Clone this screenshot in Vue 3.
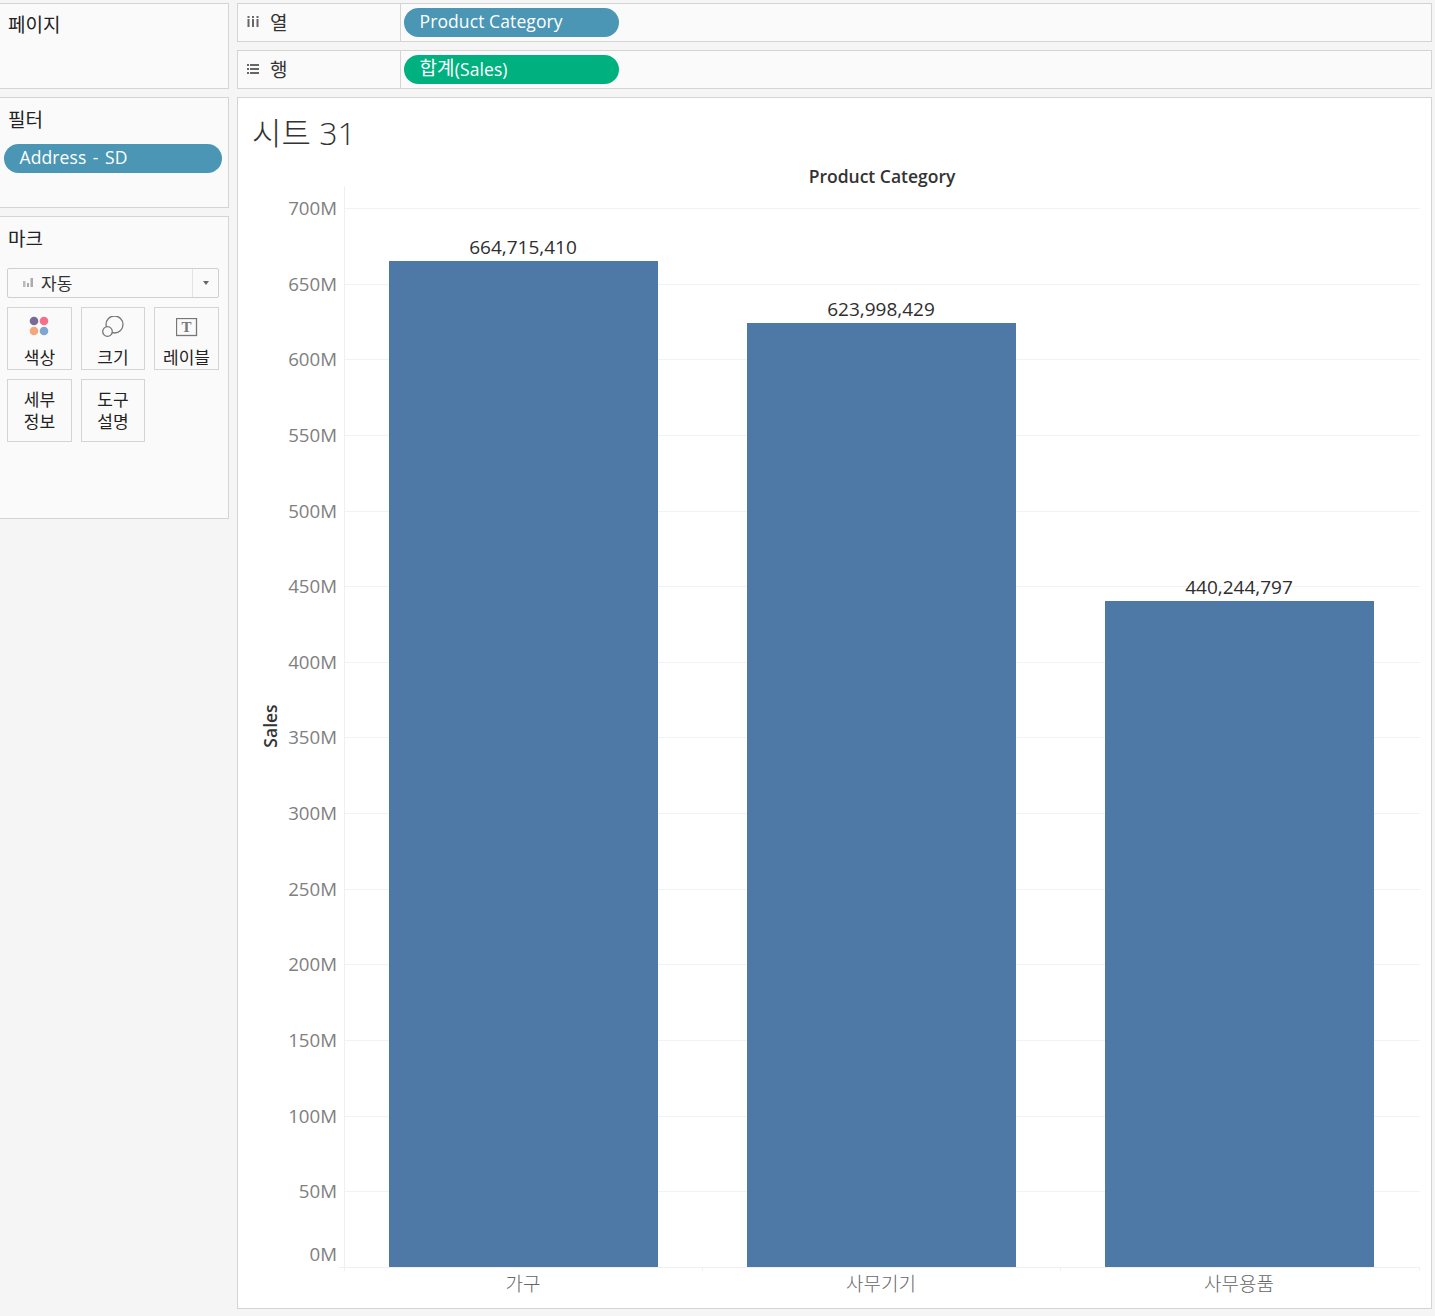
<script setup>
const ticks = Array.from({ length: 15 }, (_, i) => {
  const v = i * 50
  return { v, label: v + 'M', y: Math.round(1266.9 - v * 1.5128) }
})
const bars = [
  { name: '가구', label: '664,715,410', x: 389, top: 261 },
  { name: '사무기기', label: '623,998,429', x: 747, top: 323 },
  { name: '사무용품', label: '440,244,797', x: 1105, top: 601 }
].map(b => ({ ...b, h: 1267 - b.top, cx: b.x + 134 }))
</script>

<template>
  <div class="page">
    <aside class="side">
      <section class="panel pages"><h3>페이지</h3></section>
      <section class="panel filters">
        <h3>필터</h3>
        <div class="pill teal filter-pill">Address - SD</div>
      </section>
      <section class="panel marks">
        <h3>마크</h3>
        <div class="select">
          <span class="sel-main">
            <svg width="10" height="9" viewBox="0 0 10 9" class="barsico">
              <rect x="0" y="3" width="2.500" height="6" fill="#bbb" />
              <rect x="4" y="5" width="2" height="4" fill="#aaa" />
              <rect x="7.500" y="0" width="2.500" height="9" fill="#aaa" />
            </svg>
            자동
          </span>
          <span class="sel-arrow"><i></i></span>
        </div>
        <div class="mark-grid">
          <div class="mark">
            <svg width="22" height="22" viewBox="0 0 22 22">
              <circle cx="5" cy="5" r="4.300" fill="#7b6a96" />
              <circle cx="15" cy="5" r="4.300" fill="#f4708a" />
              <circle cx="5" cy="15" r="4.300" fill="#f2a77c" />
              <circle cx="15" cy="15" r="4.300" fill="#7fa6d0" />
            </svg>
            <span>색상</span>
          </div>
          <div class="mark">
            <svg width="24" height="22" viewBox="0 0 24 22" fill="none" stroke="#777" stroke-width="1.300">
              <circle cx="13.500" cy="8.500" r="8.500" />
              <circle cx="6.500" cy="15.500" r="4.800" fill="#fafafa" />
            </svg>
            <span>크기</span>
          </div>
          <div class="mark">
            <svg width="22" height="20" viewBox="0 0 22 20">
              <rect x="0.500" y="0.500" width="20" height="17" fill="none" stroke="#777" stroke-width="1.300" />
              <text x="10.500" y="14" text-anchor="middle" class="t-glyph">T</text>
            </svg>
            <span>레이블</span>
          </div>
          <div class="mark two"><span>세부<br />정보</span></div>
          <div class="mark two"><span>도구<br />설명</span></div>
        </div>
      </section>
    </aside>

    <main class="main">
      <div class="shelf">
        <div class="shelf-head">
          <svg width="12" height="11" viewBox="0 0 12 11" fill="#666">
            <rect x="0.500" y="0" width="2" height="2" /><rect x="0.500" y="3" width="2" height="8" />
            <rect x="5" y="0" width="2" height="2" /><rect x="5" y="3" width="2" height="8" />
            <rect x="9.500" y="0" width="2" height="2" /><rect x="9.500" y="3" width="2" height="8" />
          </svg>
          <span>열</span>
        </div>
        <div class="shelf-body"><div class="pill teal shelf-pill">Product Category</div></div>
      </div>
      <div class="shelf">
        <div class="shelf-head">
          <svg width="12" height="10" viewBox="0 0 12 10" fill="#666">
            <rect x="0" y="0" width="2" height="2" /><rect x="3" y="0" width="9" height="2" />
            <rect x="0" y="4" width="2" height="2" /><rect x="3" y="4" width="9" height="2" />
            <rect x="0" y="8" width="2" height="2" /><rect x="3" y="8" width="9" height="2" />
          </svg>
          <span>행</span>
        </div>
        <div class="shelf-body"><div class="pill green shelf-pill sum"><span class="kr">합계</span>(Sales)</div></div>
      </div>

      <section class="sheet">
        <h1>시트 31</h1>
        <svg class="chart" width="1194" height="1211" viewBox="238 98 1194 1211">
          <line x1="344.500" x2="344.500" y1="186" y2="1271" class="axis" />
          <g v-for="t in ticks" :key="t.v">
            <line x1="345" x2="1420" :y1="t.y + .5" :y2="t.y + .5" class="grid" />
            <text x="337" :y="t.v === 0 ? 1261 : t.y + 7" text-anchor="end" class="tick">{{ t.label }}</text>
          </g>
          <line x1="339" x2="1420" y1="1267.500" y2="1267.500" class="axis" />
          <line x1="1419.500" x2="1419.500" y1="1267" y2="1271" class="axis" />
          <line x1="702.500" x2="702.500" y1="1267" y2="1271" class="axis" />
          <line x1="1060.500" x2="1060.500" y1="1267" y2="1271" class="axis" />
          <text x="882" y="183" text-anchor="middle" class="head">Product Category</text>
          <text transform="translate(277 726) rotate(-90)" text-anchor="middle" class="head">Sales</text>
          <g v-for="b in bars" :key="b.name">
            <rect :x="b.x" :y="b.top" width="269" :height="b.h" fill="#4e79a7" />
            <text :x="b.cx" :y="b.top - 7" text-anchor="middle" class="val">{{ b.label }}</text>
            <text :x="b.cx" y="1291" text-anchor="middle" class="cat">{{ b.name }}</text>
          </g>
        </svg>
      </section>
    </main>
  </div>
</template>

<style>
html, body { margin: 0; background: #f5f5f5; }
</style>

<style scoped>
.page {
  width: 1435px;
  height: 1316px;
  box-sizing: border-box;
  padding: 3px 3px 7px 0;
  display: flex;
  gap: 8px;
  background: #f5f5f5;
  color: #222;
  font-family: "Open Sans", "Noto Sans CJK KR", sans-serif;
  overflow: hidden;
}
.side { width: 229px; flex: none; display: flex; flex-direction: column; gap: 8px; }
.panel {
  box-sizing: border-box;
  background: #fafafa;
  border: 1px solid #d4d4d4;
  border-left: 0;
  padding-left: 8px;
}
.panel h3 {
  margin: 0;
  font: 400 19px/24px "Noto Sans CJK KR", sans-serif;
  color: #222;
}
.pages { height: 86px; padding-top: 8px; }
.filters { height: 111px; padding-top: 9px; padding-left: 4px; }
.filters h3 { padding-left: 4px; }
.marks { height: 303px; padding-top: 9px; padding-left: 7px; }
.marks h3 { padding-left: 1px; }
.pill {
  box-sizing: border-box;
  height: 29px;
  border-radius: 15px;
  color: #fff;
  font-size: 17.500px;
  line-height: 27px;
  padding-left: 15.500px;
  white-space: nowrap;
  letter-spacing: 0.100px;
}
.teal { background: #4a96b4; }
.green { background: #00b180; }
.filter-pill { width: 218px; margin-top: 13px; word-spacing: 1.800px; }
.shelf-pill { width: 215px; }
.sum { line-height: 25px; }
.kr {
  font-family: "Noto Sans CJK KR", sans-serif;
  font-size: 19px;
  position: relative;
  top: -1px;
}
.select {
  margin-top: 18px;
  box-sizing: border-box;
  width: 212px;
  height: 30px;
  border: 1px solid #cfcfcf;
  border-radius: 2px;
  display: flex;
  background: #fafafa;
}
.sel-main {
  flex: 1;
  display: flex;
  align-items: center;
  gap: 8px;
  padding: 0 0 2px 15px;
  font: 400 17px/1 "Noto Sans CJK KR", sans-serif;
  color: #333;
}
.sel-arrow {
  width: 25px;
  border-left: 1px solid #e2e2e2;
  display: flex;
  align-items: center;
  justify-content: center;
}
.sel-arrow i {
  width: 0; height: 0;
  border-left: 3.500px solid transparent;
  border-right: 3.500px solid transparent;
  border-top: 4px solid #666;
}
.mark-grid {
  margin-top: 9px;
  width: 212px;
  display: grid;
  grid-template-columns: 65px 64px 65px;
  column-gap: 9px;
  row-gap: 9px;
}
.mark {
  box-sizing: border-box;
  height: 63px;
  border: 1px solid #d4d4d4;
  display: flex;
  flex-direction: column;
  align-items: center;
  justify-content: flex-end;
  padding-bottom: 1px;
  font: 400 17px/22px "Noto Sans CJK KR", sans-serif;
  color: #222;
}
.mark svg { margin-bottom: 8px; }
.mark.two { justify-content: center; padding-bottom: 1px; text-align: center; }
.t-glyph { font: 700 15px "Liberation Serif", serif; fill: #777; }
.main { flex: 1; min-width: 0; display: flex; flex-direction: column; gap: 8px; }
.shelf {
  box-sizing: border-box;
  height: 39px;
  display: flex;
  background: #fafafa;
  border: 1px solid #d4d4d4;
}
.shelf-head {
  width: 163px;
  flex: none;
  box-sizing: border-box;
  border-right: 1px solid #d4d4d4;
  display: flex;
  align-items: center;
  gap: 11px;
  padding: 0 0 2px 9px;
  font: 400 19px/1 "Noto Sans CJK KR", sans-serif;
  color: #333;
}
.shelf-body { flex: 1; padding: 4px 0 0 3px; }
.sheet {
  position: relative;
  flex: 1;
  min-height: 0;
  background: #fff;
  border: 1px solid #d4d4d4;
  box-sizing: border-box;
}
.sheet h1 {
  position: absolute;
  left: 14px;
  top: 13px;
  margin: 0;
  font: 300 32px/44px "Open Sans", "Noto Sans CJK KR", sans-serif;
  color: #333;
}
.chart { display: block; }
.grid { stroke: #f2f2f2; stroke-width: 1; }
.axis { stroke: #f0f0f0; stroke-width: 1; }
.tick { font: 400 18.700px "Open Sans", sans-serif; fill: #808080; }
.head { font: 600 17.500px "Open Sans", sans-serif; fill: #333; }
.val { font: 400 19px "Open Sans", sans-serif; fill: #2e2e2e; }
.cat { font: 300 19px "Noto Sans CJK KR", sans-serif; fill: #666; }
</style>
